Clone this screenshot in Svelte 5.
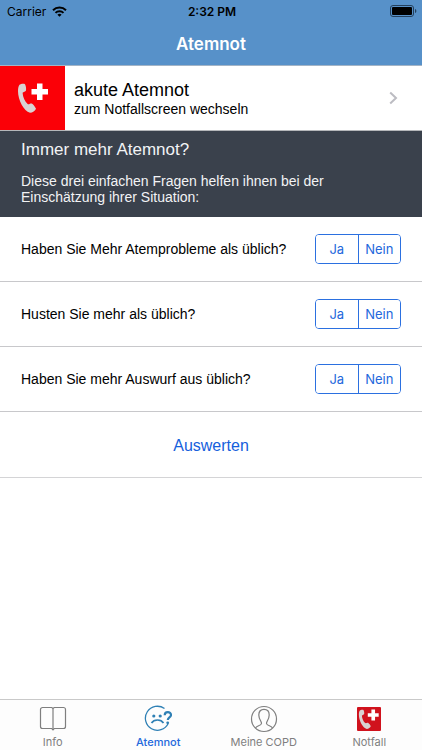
<script lang="ts">
	type Answer = 'Ja' | 'Nein';

	const options: Answer[] = ['Ja', 'Nein'];

	let questions = $state<{ text: string; answer: Answer | null }[]>([
		{ text: 'Haben Sie Mehr Atemprobleme als üblich?', answer: null },
		{ text: 'Husten Sie mehr als üblich?', answer: null },
		{ text: 'Haben Sie mehr Auswurf aus üblich?', answer: null },
	]);

	const tabs = [
		{ id: 'info', label: 'Info' },
		{ id: 'atemnot', label: 'Atemnot' },
		{ id: 'copd', label: 'Meine COPD' },
		{ id: 'notfall', label: 'Notfall' },
	];

	let active = $state('atemnot');
</script>

{#snippet phone()}
	<path
		class="receiver"
		d="M19.500 18.800C20.500 17.800 24 17.200 25 18.200c1 1.800 1.300 4.300 1 6.200-.5 1.300-2.600 1.300-3.400 2.400.2 4.200 2.200 8.600 5 11.200 1.400.7 2.800-.9 4.200-.5 1.800 1.300 3.500 3.500 4.200 5.300-.8 2-3.400 4-6 4-6.200-1.300-12-13-12-21.500 0-2.800.4-5.200 1.500-6.500z"
	/>
	<path class="cross" d="M37 17.500h5.500v5.500h5.500v5.500h-5.500v5.500h-5.500v-5.500h-5.500v-5.500h5.500z" />
{/snippet}

<div class="app">
	<header>
		<div class="status">
			<span class="carrier">
				Carrier
				<svg width="15" height="11" viewBox="0 0 15 11" fill="none" stroke="currentColor" stroke-width="2">
					<path d="M1 4.200a9.300 9.300 0 0 1 13 0" />
					<path d="M3.500 6.900a5.700 5.700 0 0 1 8 0" />
					<path d="M7.500 10.800 5.400 8.700a3 3 0 0 1 4.200 0z" fill="currentColor" stroke="none" />
				</svg>
			</span>
			<span class="time">2:32 PM</span>
			<span class="battery">
				<svg width="27" height="12" viewBox="0 0 27 12">
					<rect x=".5" y=".5" width="23" height="11" rx="2.500" fill="none" stroke="#24405c" />
					<rect x="2" y="2" width="20" height="8" rx="1" />
					<path d="M25 4c1.800.5 1.800 3.500 0 4z" fill="#24405c" />
				</svg>
			</span>
		</div>
		<h1>Atemnot</h1>
	</header>

	<main>
		<a class="emergency" href="#notfall">
			<svg class="badge" viewBox="0 0 65 64" aria-hidden="true">
				{@render phone()}
			</svg>
			<span class="emergency-text">
				<strong>akute Atemnot</strong>
				<span>zum Notfallscreen wechseln</span>
			</span>
			<svg class="chevron" width="9" height="14" viewBox="0 0 9 14" fill="none" stroke="#bcbcc2" stroke-width="2">
				<path d="M1.200 1.500 7 7l-5.800 5.500" />
			</svg>
		</a>

		<section class="intro">
			<h2>Immer mehr Atemnot?</h2>
			<p>Diese drei einfachen Fragen helfen ihnen bei der Einschätzung ihrer Situation:</p>
		</section>

		{#each questions as question, i}
			<div class="question">
				<span id={`question-${i}`}>{question.text}</span>
				<div class="segments" role="group" aria-labelledby={`question-${i}`}>
					{#each options as option}
						<button
							type="button"
							class:selected={question.answer === option}
							aria-pressed={question.answer === option}
							onclick={() => (question.answer = option)}
						>
							{option}
						</button>
					{/each}
				</div>
			</div>
		{/each}

		<button type="button" class="evaluate">Auswerten</button>
	</main>

	<nav>
		{#each tabs as tab}
			<a
				href={`#${tab.id}`}
				class:active={active === tab.id}
				aria-current={active === tab.id ? 'page' : undefined}
				onclick={() => (active = tab.id)}
			>
				{#if tab.id === 'info'}
					<svg viewBox="0 0 28 28" fill="none" stroke="currentColor" stroke-width="1.200">
						<path d="M14 3.500 12.800 2.500H3.500a2 2 0 0 0-2 2v17a2 2 0 0 0 2 2h9.300L14 24.800l1.200-1.300h9.300a2 2 0 0 0 2-2v-17a2 2 0 0 0-2-2h-9.300z" />
						<path d="M14 3.500v21" />
					</svg>
				{:else if tab.id === 'atemnot'}
					<svg viewBox="0 0 28 28" fill="none" stroke="#2f80b5" stroke-width="1.300">
						<path d="M20.500 3.600A12 12 0 1 0 24.200 18.500" />
						<path d="M7.500 18c2.500-4 9.500-4 12 0" stroke-width="1.700" />
						<circle cx="9.800" cy="11" r="1.600" fill="#2f80b5" stroke="none" />
						<circle cx="16.200" cy="11" r="1.600" fill="#2f80b5" stroke="none" />
						<path d="M20.700 10.300c0-4.200 6.300-4.200 6.300-.3 0 2.500-3.200 2.400-3.200 5" stroke-width="2.200" />
						<circle cx="23.700" cy="17.800" r="1.400" fill="#2f80b5" stroke="none" />
					</svg>
				{:else if tab.id === 'copd'}
					<svg viewBox="0 0 28 28" fill="none" stroke="currentColor" stroke-width="1.200">
						<circle cx="14" cy="14" r="12.500" />
						<path d="M5.500 23c1-2.500 5.500-2 6-4.500.3-2-2.700-4-2.700-8.500 0-3.700 2.100-5.700 5.200-5.700s5.200 2 5.200 5.700c0 4.500-3 6.500-2.700 8.500.5 2.500 5 2 6 4.500" />
					</svg>
				{:else}
					<svg viewBox="0 0 28 28">
						<rect x="2" y="2" width="24" height="24" rx="1" fill="#d0121d" />
						<g transform="translate(-8 -7) scale(.66)">
							{@render phone()}
						</g>
					</svg>
				{/if}
				<span>{tab.label}</span>
			</a>
		{/each}
	</nav>
</div>

<style>
	:global(body) {
		margin: 0;
		background: #fff;
	}

	.app {
		display: flex;
		flex-direction: column;
		min-height: 100vh;
		font-family: 'Liberation Sans', Arial, sans-serif;
		color: #000;
	}

	a {
		color: inherit;
		text-decoration: none;
	}

	button {
		font: inherit;
		cursor: pointer;
	}

	header {
		background: #5791c9;
		border-bottom: 1px solid #a3b4c6;
		font-family: Inter, sans-serif;
	}

	.status {
		display: grid;
		grid-template-columns: 1fr auto 1fr;
		align-items: center;
		height: 22px;
		padding: 0 5px 0 7px;
		font-size: 12px;
	}

	.carrier {
		display: flex;
		align-items: center;
		gap: 6px;
	}

	.time {
		font-weight: 600;
	}

	.battery {
		display: flex;
		justify-content: flex-end;
	}

	h1 {
		margin: 0;
		height: 43px;
		color: #fff;
		font-size: 17px;
		font-weight: 600;
		line-height: 44px;
		text-align: center;
	}

	main {
		flex: 1;
	}

	.emergency {
		display: flex;
		align-items: center;
		padding-right: 24px;
		border-bottom: 1px solid #b5b7ba;
	}

	.badge {
		width: 65px;
		height: 64px;
		background: #fb0007;
	}

	.badge :global(.receiver),
	nav :global(.receiver) {
		fill: #d9d2d2;
	}

	.badge :global(.cross),
	nav :global(.cross) {
		fill: #fff;
	}

	.emergency-text {
		display: flex;
		flex: 1;
		flex-direction: column;
		padding: 2px 0 0 9px;
		font-size: 14px;
		line-height: 18px;
	}

	.emergency-text strong {
		font-size: 18px;
		font-weight: 400;
		line-height: 20px;
	}

	.intro {
		padding: 8px 21px 12px;
		background: #3a414c;
		color: #f2f3f5;
	}

	h2 {
		margin: 0 0 12px;
		font-size: 17px;
		font-weight: 400;
		line-height: 22px;
	}

	p {
		margin: 0;
		font-size: 14px;
		line-height: 16px;
	}

	.question {
		display: flex;
		align-items: center;
		justify-content: space-between;
		height: 64px;
		padding: 0 21px;
		border-bottom: 1px solid #c8c8cb;
		font-size: 14px;
	}

	.segments {
		display: flex;
		flex-shrink: 0;
		box-sizing: border-box;
		width: 86px;
		height: 30px;
		overflow: hidden;
		border: 1px solid #2b70e0;
		border-radius: 4px;
	}

	.segments button {
		flex: 1 1 0;
		padding: 0;
		border: 0;
		background: #fff;
		color: #2367dc;
		font-family: Inter, sans-serif;
		font-size: 13px;
	}

	.segments button + button {
		border-left: 1px solid #2b70e0;
	}

	.segments .selected {
		background: #2b70e0;
		color: #fff;
	}

	.evaluate {
		display: block;
		width: 100%;
		height: 66px;
		padding: 2px 0 0;
		border: 0;
		border-bottom: 1px solid #d4d4d6;
		background: none;
		color: #1560dc;
		font-size: 16px;
	}

	nav {
		display: flex;
		border-top: 1px solid #c9c9c9;
		background: #fdfdfd;
		font-family: Inter, sans-serif;
		font-size: 11px;
	}

	nav a {
		display: flex;
		flex: 1 1 0;
		flex-direction: column;
		align-items: center;
		gap: 2px;
		padding: 5px 0 1px;
		color: #7f7f7f;
		line-height: 14px;
	}

	nav svg {
		width: 28px;
		height: 28px;
	}

	nav .active {
		color: #2469dc;
		font-weight: 500;
	}
</style>
